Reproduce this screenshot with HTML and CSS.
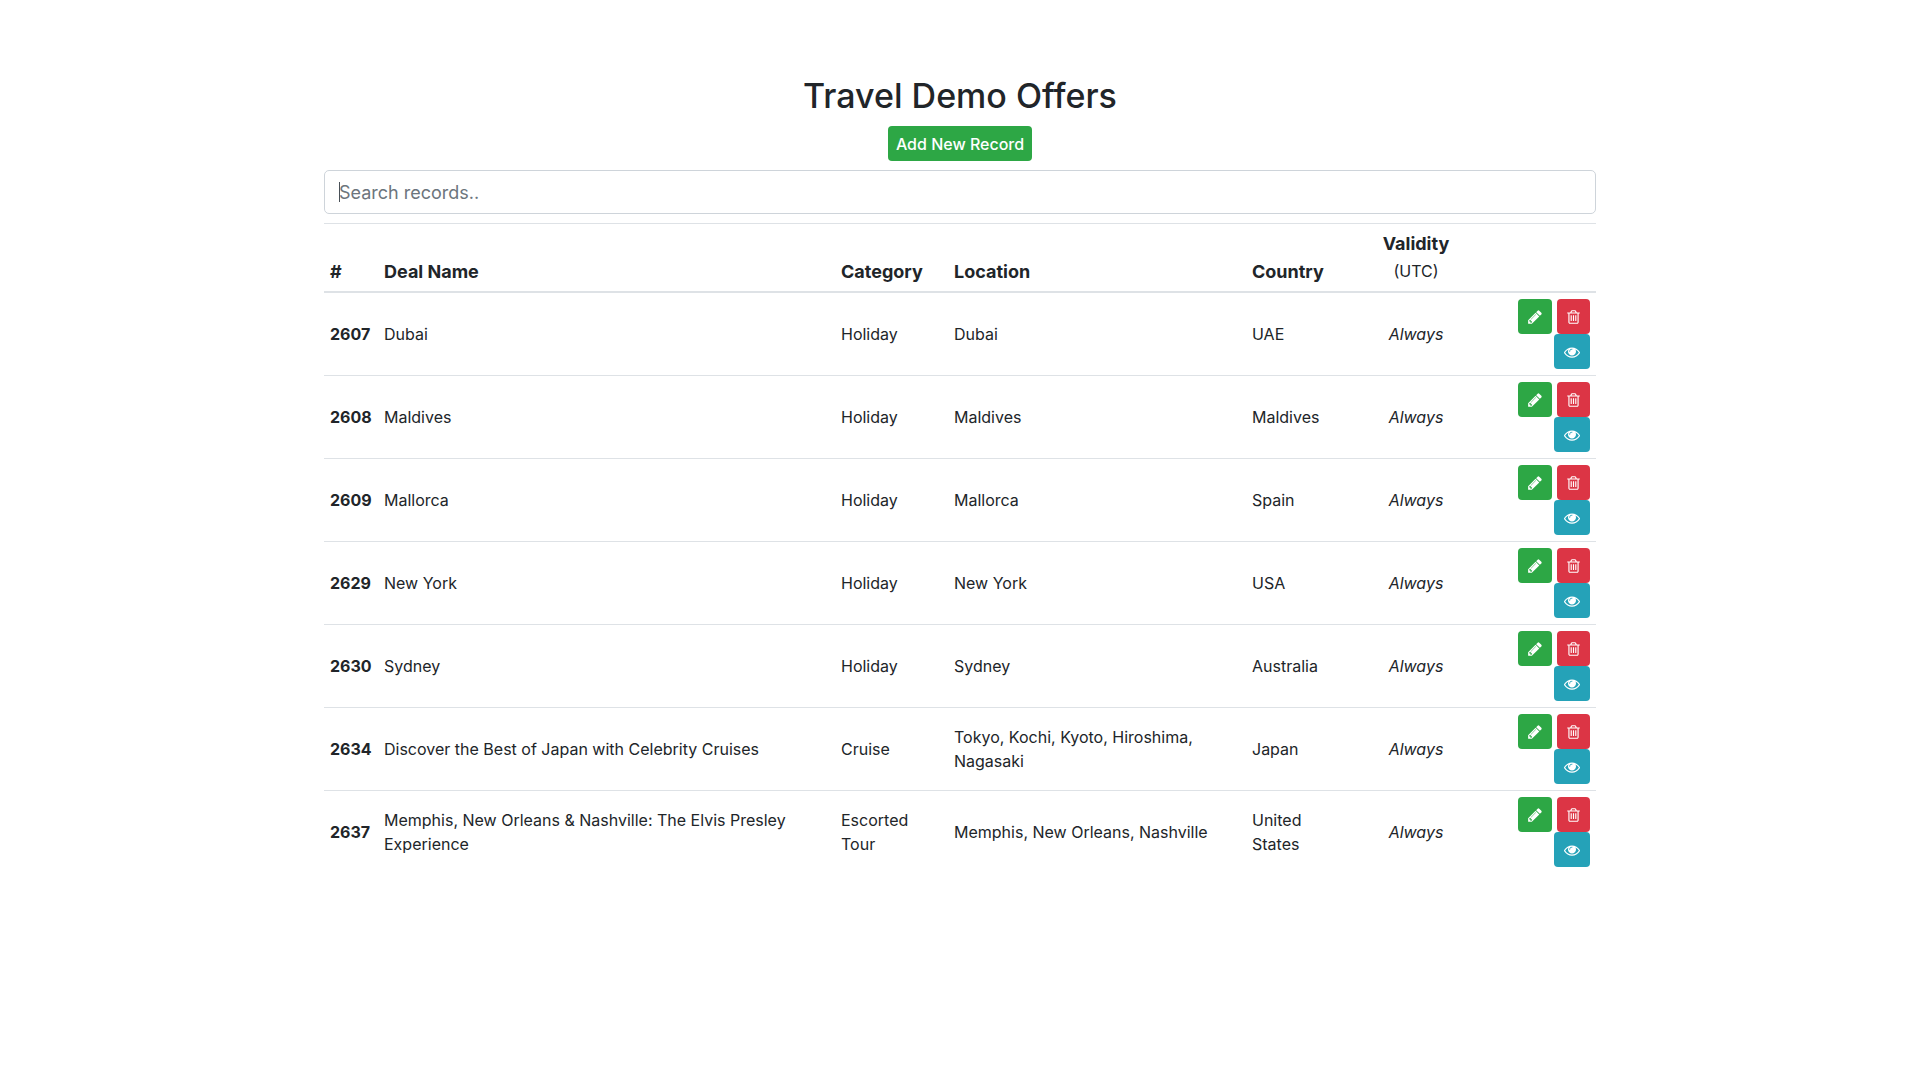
FILE: index.html
```html
<!DOCTYPE html>
<html lang="en">
<head>
    <meta charset="UTF-8">
    <meta name="viewport" content="width=device-width, initial-scale=1.0">
    <title>Travel Demo Offers</title>
    <link rel="stylesheet" href="styles.css">
</head>
<body>

    <svg class="sprite" aria-hidden="true">
        <symbol id="pencil" viewBox="128 0 1536 1792">
            <path d="M491 1536l91-91-235-235-91 91v107h128v128h107zm523-928q0-22-22-22-10 0-17 7l-542 542q-7 7-7 17 0 22 22 22 10 0 17-7l542-542q7-7 7-17zm-54-192l416 416-832 832h-416v-416zm683 96q0 53-37 90l-166 166-416-416 166-165q36-38 90-38 53 0 91 38l235 234q37 39 37 91z"/>
        </symbol>
        <symbol id="trash" viewBox="192 0 1408 1792">
            <path d="M704 736v576q0 14-9 23t-23 9h-64q-14 0-23-9t-9-23v-576q0-14 9-23t23-9h64q14 0 23 9t9 23zm256 0v576q0 14-9 23t-23 9h-64q-14 0-23-9t-9-23v-576q0-14 9-23t23-9h64q14 0 23 9t9 23zm256 0v576q0 14-9 23t-23 9h-64q-14 0-23-9t-9-23v-576q0-14 9-23t23-9h64q14 0 23 9t9 23zm128 724v-948h-896v948q0 22 7 40.5t14.5 27 10.5 8.5h832q3 0 10.5-8.5t14.5-27 7-40.5zm-672-1076h448l-48-117q-7-9-17-11h-317q-10 2-17 11zm928 32v64q0 14-9 23t-23 9h-96v948q0 83-47 143.5t-113 60.5h-832q-66 0-113-58.5t-47-141.5v-952h-96q-14 0-23-9t-9-23v-64q0-14 9-23t23-9h309l70-167q15-37 54-63t79-26h320q40 0 79 26t54 63l70 167h309q14 0 23 9t9 23z"/>
        </symbol>
        <symbol id="eye" viewBox="0 0 1792 1792">
            <path d="M1664 960q-152-236-381-353 61 104 61 225 0 185-131.5 316.5t-316.5 131.5-316.5-131.5-131.5-316.5q0-121 61-225-229 117-381 353 133 205 333.5 326.5t434.5 121.5 434.5-121.5 333.5-326.5zm-720-384q0-20-14-34t-34-14q-125 0-214.5 89.5t-89.5 214.5q0 20 14 34t34 14 34-14 14-34q0-86 61-147t147-61q20 0 34-14t14-34zm848 384q0 34-20 69-140 230-376.5 368.5t-499.5 138.5-499.5-139-376.5-368q-20-35-20-69t20-69q140-229 376.5-368t499.5-139 499.5 139 376.5 368q20 35 20 69z"/>
        </symbol>
    </svg>

    <div class="container">
        <div class="header">
            <h1>Travel Demo Offers</h1>
            <button class="btn btn-success" type="button">Add New Record</button>
        </div>

        <div class="search">
            <input id="search" type="text" placeholder="Search records.." aria-label="Search records">
            <span class="caret"></span>
        </div>

        <table>
            <colgroup>
                <col class="col-id">
                <col class="col-name">
                <col class="col-category">
                <col class="col-location">
                <col class="col-country">
                <col class="col-validity">
                <col class="col-actions">
            </colgroup>
            <thead>
                <tr>
                    <th scope="col">#</th>
                    <th scope="col">Deal Name</th>
                    <th scope="col">Category</th>
                    <th scope="col">Location</th>
                    <th scope="col">Country</th>
                    <th scope="col" class="validity">Validity<br><small>(UTC)</small></th>
                    <th></th>
                </tr>
            </thead>
            <tbody id="offers"></tbody>
        </table>
    </div>

    <script>
        const offers = [
            { id: 2607, name: 'Dubai', category: 'Holiday', location: 'Dubai', country: 'UAE' },
            { id: 2608, name: 'Maldives', category: 'Holiday', location: 'Maldives', country: 'Maldives' },
            { id: 2609, name: 'Mallorca', category: 'Holiday', location: 'Mallorca', country: 'Spain' },
            { id: 2629, name: 'New York', category: 'Holiday', location: 'New York', country: 'USA' },
            { id: 2630, name: 'Sydney', category: 'Holiday', location: 'Sydney', country: 'Australia' },
            { id: 2634, name: 'Discover the Best of Japan with Celebrity Cruises', category: 'Cruise', location: 'Tokyo, Kochi, Kyoto, Hiroshima, Nagasaki', country: 'Japan' },
            { id: 2637, name: 'Memphis, New Orleans &amp; Nashville: The Elvis Presley Experience', category: 'Escorted Tour', location: 'Memphis, New Orleans, Nashville', country: 'United States' }
        ];

        const tableBody = document.getElementById('offers');

        tableBody.innerHTML = offers.map(offer => `<tr>
            <th scope="row">${offer.id}</th>
            <td>${offer.name}</td>
            <td>${offer.category}</td>
            <td>${offer.location}</td>
            <td>${offer.country}</td>
            <td class="validity"><em>Always</em></td>
            <td>
                <div class="actions">
                    <button class="btn btn-success" type="button" aria-label="Edit"><svg class="icon icon-pencil"><use href="#pencil"/></svg></button>
                    <button class="btn btn-danger" type="button" aria-label="Delete"><svg class="icon icon-trash"><use href="#trash"/></svg></button>
                    <button class="btn btn-info" type="button" aria-label="View"><svg class="icon"><use href="#eye"/></svg></button>
                </div>
            </td>
        </tr>`).join('');

        document.getElementById('search').addEventListener('input', event => {
            const value = event.target.value.toLowerCase();
            for (const row of tableBody.rows) {
                row.hidden = !row.textContent.toLowerCase().includes(value);
            }
        });
    </script>

</body>
</html>
```
FILE: styles.css
```css
* {
    box-sizing: border-box;
}

body {
    margin: 0;
    background: #fff;
    color: #212529;
    font-family: Inter, sans-serif;
    font-size: 18px;
    line-height: 27px;
}

.sprite {
    display: none;
}

.container {
    width: 90%;
    max-width: 1272px;
    margin: 0 auto;
    padding: 74px 0;
}

.header {
    display: flex;
    flex-direction: column;
    align-items: center;
    gap: 9px;
    margin-bottom: 9px;
}

h1 {
    margin: 0;
    font-size: 34px;
    font-weight: 500;
    line-height: 43px;
}

.btn {
    display: flex;
    align-items: center;
    justify-content: center;
    height: 35px;
    padding: 0 10px;
    border: none;
    border-radius: 4px;
    color: #fff;
    font-family: inherit;
    font-size: 16px;
    font-weight: 500;
    cursor: pointer;
}

.header .btn {
    padding: 0 8px;
}

.btn-success {
    background: #2da745;
}

.btn-danger {
    background: #dc3545;
}

.btn-info {
    background: #25a2b8;
}

.search {
    position: relative;
    margin-bottom: 9px;
}

.search input {
    display: block;
    width: 100%;
    height: 44px;
    padding: 0 14px;
    border: 1px solid #ced4da;
    border-radius: 5px;
    color: #495057;
    font: inherit;
    outline: none;
}

.search input::placeholder {
    color: #6c757d;
    opacity: 1;
}

.caret {
    position: absolute;
    top: 12px;
    left: 15px;
    width: 1px;
    height: 20px;
    background: #495057;
}

.search input:not(:placeholder-shown) + .caret {
    display: none;
}

table {
    width: 100%;
    table-layout: fixed;
    border-collapse: collapse;
}

.col-id {
    width: 54px;
}

.col-category {
    width: 113px;
}

.col-location {
    width: 298px;
}

.col-country {
    width: 97px;
}

.col-validity {
    width: 146px;
}

.col-actions {
    width: 107px;
}

th, td {
    padding: 6px;
    border-top: 1px solid #dee2e6;
    text-align: left;
}

thead th {
    border-bottom: 2px solid #dee2e6;
    vertical-align: bottom;
}

tbody th, tbody td {
    font-size: 16px;
    line-height: 24px;
}

small {
    font-size: 16px;
    font-weight: 400;
}

th.validity, td.validity {
    text-align: center;
}

.actions {
    display: flex;
    flex-wrap: wrap;
    justify-content: flex-end;
    column-gap: 5px;
}

.icon {
    width: 16px;
    height: 16px;
    fill: currentColor;
}

.icon-pencil {
    width: 14px;
}

.icon-trash {
    width: 13px;
}
```
